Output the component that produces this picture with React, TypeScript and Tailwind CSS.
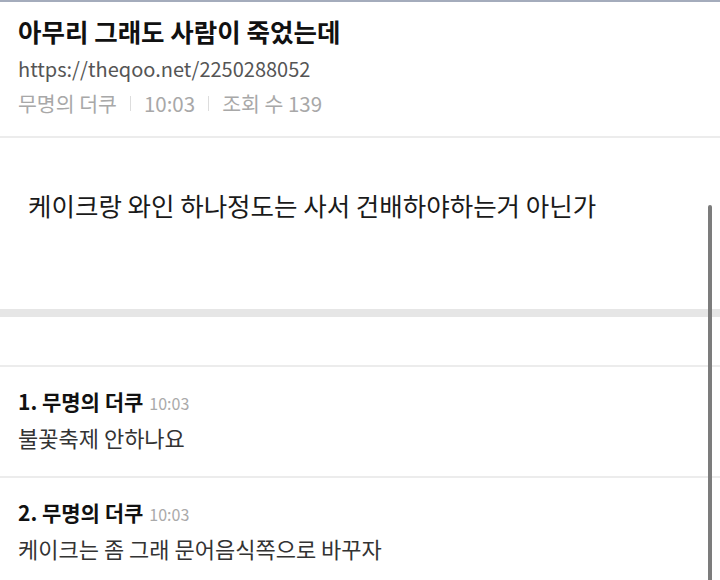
const font = { fontFamily: '"Noto Sans CJK KR", "Noto Sans", sans-serif' };

function Comment({ no, name, time, text }: { no: number; name: string; time: string; text: string }) {
  return (
    <div className="px-[18px] pt-[20px] pb-[25px] border-b-2 border-[#ececec]">
      <div className="flex items-baseline gap-[6px] leading-[28px]">
        <span className="text-[21px] font-bold text-[#111]">
          {no}. {name}
        </span>
        <span className="text-[16px] text-[#aaa]">{time}</span>
      </div>
      <p className="mt-[6px] text-[22px] leading-[28px] text-[#333]">{text}</p>
    </div>
  );
}

export default function App() {
  return (
    <div className="relative w-[720px] h-[580px] overflow-hidden bg-white" style={font}>
      <div className="h-[2px] bg-[#a4acbc]" />
      {/* header */}
      <div className="px-[18px] pt-[12px] pb-[19px] border-b-2 border-[#ececec]">
        <h1 className="text-[25.5px] font-bold leading-[34px] text-[#111]">
          아무리 그래도 사람이 죽었는데
        </h1>
        <div className="mt-[7px] text-[20px] leading-[28px] text-[#555]">https://theqoo.net/2250288052</div>
        <div className="mt-[6px] flex items-center text-[20.5px] leading-[28px] text-[#a8a8a8]">
          <span>무명의 더쿠</span>
          <span className="mx-[13px] h-[15px] w-px bg-[#ddd]" />
          <span>10:03</span>
          <span className="mx-[13px] h-[15px] w-px bg-[#ddd]" />
          <span>조회 수 139</span>
        </div>
      </div>
      {/* body */}
      <div className="h-[171px] px-[28px] pt-[50px]">
        <p className="text-[25.5px] leading-[34px] text-[#1a1a1a]">
          케이크랑 와인 하나정도는 사서 건배하야하는거 아닌가
        </p>
      </div>
      <div className="h-[8px] bg-[#e6e6e6]" />
      <div className="h-[50px] border-b-2 border-[#ececec]" />
      <Comment no={1} name="무명의 더쿠" time="10:03" text="불꽃축제 안하나요" />
      <Comment no={2} name="무명의 더쿠" time="10:03" text="케이크는 좀 그래 문어음식쪽으로 바꾸자" />
      {/* scrollbar */}
      <div className="absolute right-[8px] top-[205px] bottom-0 w-[4px] rounded-t-full bg-[#7c7c7c]" />
    </div>
  );
}
